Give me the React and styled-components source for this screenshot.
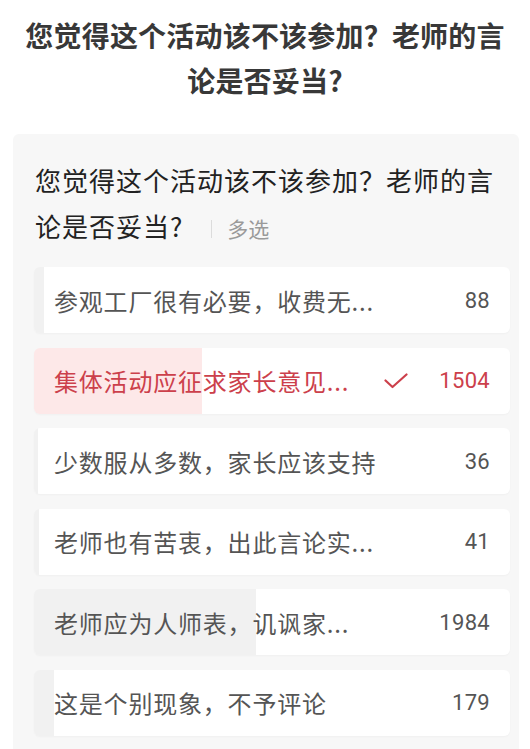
import React from 'react';
import styled, { createGlobalStyle } from 'styled-components';

const GlobalStyle = createGlobalStyle`
  html, body {
    margin: 0;
    padding: 0;
    background: #fff;
  }
  body {
    font-family: "Noto Sans CJK SC", "Noto Sans", sans-serif;
  }
`;

const RED = '#cc404b';
const TOTAL = 4257;

const options = [
  { label: '参观工厂很有必要，收费无...', count: 88 },
  { label: '集体活动应征求家长意见...', count: 1504, picked: true },
  { label: '少数服从多数，家长应该支持', count: 36 },
  { label: '老师也有苦衷，出此言论实...', count: 41 },
  { label: '老师应为人师表，讥讽家...', count: 1984 },
  { label: '这是个别现象，不予评论', count: 179 },
];

const Page = styled.div`
  width: 530px;
  min-height: 749px;
  overflow: hidden;
`;

const Title = styled.h1`
  margin: 0;
  padding: 13px 20px 0;
  font-size: 28px;
  font-weight: 700;
  letter-spacing: 0.2px;
  line-height: 45px;
  color: #383838;
  text-align: center;
`;

const Card = styled.section`
  margin: 31px 0 0 13px;
  width: 506px;
  padding: 23px 9px 12px 21px;
  box-sizing: border-box;
  background: #f7f7f7;
  border-radius: 6px 6px 0 0;
  min-height: 616px;
`;

const Question = styled.div`
  padding: 0 12px 0 1px;
  font-size: 26px;
  letter-spacing: 1px;
  line-height: 46px;
  color: #222;
`;

const Divider = styled.span`
  display: inline-block;
  width: 1px;
  height: 18px;
  margin: 0 15px 0 28px;
  background: #dcdcdc;
  vertical-align: -1px;
`;

const Multi = styled.span`
  font-size: 21px;
  letter-spacing: 0;
  line-height: 1;
  color: #9a9a9a;
`;

const List = styled.div`
  margin-top: 18px;
  display: flex;
  flex-direction: column;
  gap: 14.6px;
`;

const Row = styled.div`
  height: 66px;
  display: flex;
  align-items: center;
  padding: 0 20px;
  border-radius: 6px;
  background: linear-gradient(
    to right,
    ${p => (p.$picked ? '#fde8e8' : '#f1f1f1')} ${p => p.$pct}%,
    #fff ${p => p.$pct}%
  );
  box-shadow: 0 1px 2px rgba(0, 0, 0, 0.03);
  color: ${p => (p.$picked ? RED : '#555')};
`;

const Label = styled.span`
  flex: 1;
  font-size: 24px;
  letter-spacing: 0.8px;
  white-space: nowrap;
`;

const Check = styled.svg`
  width: 24px;
  height: 16px;
  margin-right: 31px;
  flex-shrink: 0;
`;

const Count = styled.span`
  font-family: Roboto, "Noto Sans", sans-serif;
  font-size: 22px;
  letter-spacing: 0.3px;
`;

const Option = ({ label, count, picked }) => (
  <Row $picked={picked} $pct={((count / TOTAL) * 100).toFixed(2)}>
    <Label>{label}</Label>
    {picked && (
      <Check viewBox="0 0 24 16" fill="none">
        <path d="M1.5 7.5 L8.5 14 L22.5 1.5" stroke={RED} strokeWidth="2.2" strokeLinecap="round" strokeLinejoin="round" />
      </Check>
    )}
    <Count>{count}</Count>
  </Row>
);

export default function App() {
  return (
    <Page>
      <GlobalStyle />
      <Title>
        您觉得这个活动该不该参加？老师的言论是否妥当?
      </Title>
      <Card>
        <Question>
          您觉得这个活动该不该参加？老师的言论是否妥当?
          <Divider />
          <Multi>多选</Multi>
        </Question>
        <List>
          {options.map(o => (
            <Option key={o.label} {...o} />
          ))}
        </List>
      </Card>
    </Page>
  );
}
